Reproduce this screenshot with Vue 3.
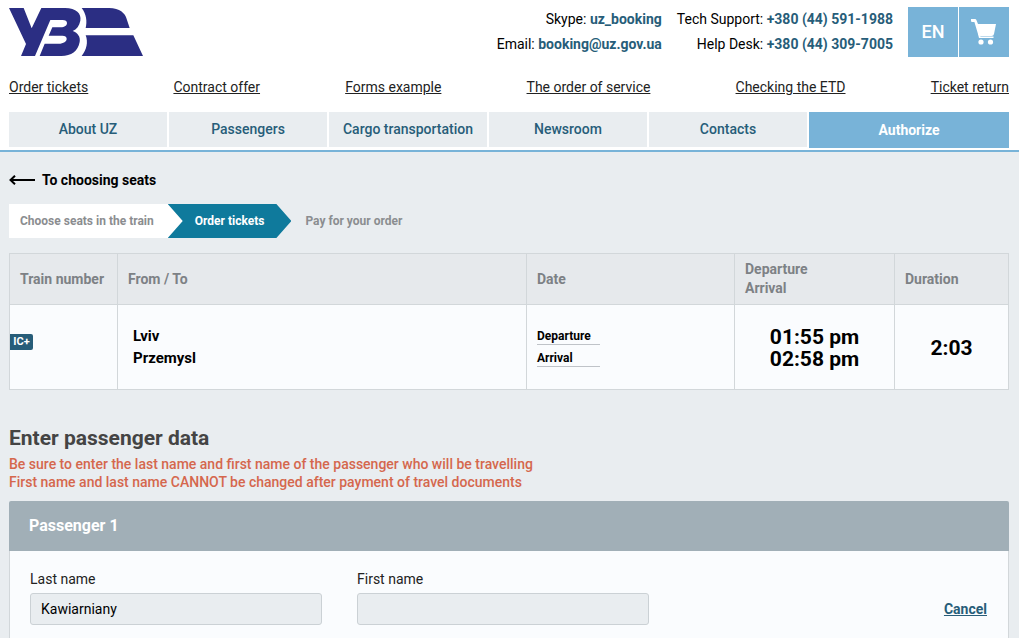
<script setup>
import { ref } from 'vue'

const quickLinks = [
  'Order tickets',
  'Contract offer',
  'Forms example',
  'The order of service',
  'Checking the ETD',
  'Ticket return'
]
const sections = ['About UZ', 'Passengers', 'Cargo transportation', 'Newsroom', 'Contacts']
const lastName = ref('Kawiarniany')
const firstName = ref('')
</script>

<template>
  <div class="page">
    <header class="header">
      <div class="top">
        <a class="logo" href="#" aria-label="UZ">
          <svg viewBox="0 0 402 144" width="134" height="48" fill="#2b2e83" aria-hidden="true">
            <path d="M0 0H44L68 61L97 0H168C202 0 218 17 214 38C211 53 203 64 191 69C207 75 215 87 212 102C207 130 187 144 157 144H92L107 107H149C164 107 173 100 173 92C173 86 168 83 160 83H119L130 58H155C167 58 174 52 174 45C174 39 169 36 161 36H124L78 144H36L51 108Z" />
            <path d="M218 0H300C333 0 348 17 352 30L362 60H230C235 40 232 18 218 0Z" />
            <path d="M230 82H373L402 144H218C233 126 238 102 230 82Z" />
          </svg>
        </a>
        <div class="contacts">
          <p>Skype: <a href="#">uz_booking</a></p>
          <p>Email: <a href="#">booking@uz.gov.ua</a></p>
        </div>
        <div class="contacts phones">
          <p>Tech Support: <b>+380 (44) 591-1988</b></p>
          <p>Help Desk: <b>+380 (44) 309-7005</b></p>
        </div>
        <button class="square" type="button">EN</button>
        <button class="square cart" type="button" aria-label="Cart">
          <svg viewBox="0 0 26 26" width="26" height="26" fill="#fff" aria-hidden="true">
            <path d="M0 0H4Q5 0 5.400 1L7 5H25L23 15Q22.700 17 20.500 17H9.500Q7.500 17 7 15L3.400 3H1Q0 3 0 1.500Z" />
            <path d="M7 15L8 19H22.500V17.500H9.500L8.500 15Z" />
            <circle cx="10" cy="23" r="2.600" />
            <circle cx="19.500" cy="23" r="2.600" />
          </svg>
        </button>
      </div>
      <nav class="quick">
        <a v-for="l in quickLinks" :key="l" href="#">{{ l }}</a>
      </nav>
      <nav class="sections">
        <a v-for="s in sections" :key="s" href="#">{{ s }}</a>
        <button type="button">Authorize</button>
      </nav>
    </header>

    <main class="main">
      <a class="back" href="#">
        <svg viewBox="0 0 26 10" width="26" height="10" fill="none" stroke="#000" stroke-width="2" aria-hidden="true">
          <path d="M26 5H1.500M6 0.700L1.500 5L6 9.300" />
        </svg>
        To choosing seats
      </a>
      <ol class="steps">
        <li class="done">Choose seats in the train</li>
        <li class="current">Order tickets</li>
        <li>Pay for your order</li>
      </ol>

      <table class="trip">
        <colgroup>
          <col class="c-train"><col class="c-route"><col class="c-date"><col class="c-time"><col class="c-dur">
        </colgroup>
        <thead>
          <tr>
            <th>Train number</th>
            <th>From / To</th>
            <th>Date</th>
            <th>Departure<br>Arrival</th>
            <th>Duration</th>
          </tr>
        </thead>
        <tbody>
          <tr>
            <td class="train"><span class="badge">IC+</span></td>
            <td class="route">Lviv<br>Przemysl</td>
            <td class="date"><span>Departure</span><span>Arrival</span></td>
            <td class="time">01:55 pm<br>02:58 pm</td>
            <td class="duration">2:03</td>
          </tr>
        </tbody>
      </table>

      <h1>Enter passenger data</h1>
      <p class="warning">
        Be sure to enter the last name and first name of the passenger who will be travelling<br>
        First name and last name CANNOT be changed after payment of travel documents
      </p>

      <section class="passenger">
        <h2>Passenger 1</h2>
        <form class="fields" @submit.prevent>
          <div class="field">
            <label for="last-name">Last name</label>
            <input id="last-name" v-model="lastName" type="text">
          </div>
          <div class="field">
            <label for="first-name">First name</label>
            <input id="first-name" v-model="firstName" type="text">
          </div>
          <a class="cancel" href="#">Cancel</a>
        </form>
      </section>
    </main>
  </div>
</template>

<style>
body {
  margin: 0;
  background: #e9edf0;
  overflow: hidden;
}
</style>

<style scoped>
.page {
  font-family: Roboto, "Liberation Sans", sans-serif;
  font-size: 14px;
  line-height: 18px;
  color: #000;
}
button,
input {
  font: inherit;
}
p,
h1,
h2,
ol {
  margin: 0;
  padding: 0;
}
.header {
  background: #fff;
  border-bottom: 2px solid #78b3d8;
  padding: 7px 10px 2px 9px;
}
.top {
  display: flex;
  align-items: flex-start;
}
.logo {
  margin: 1px auto 0 0;
  height: 48px;
}
.logo svg {
  display: block;
}
.contacts {
  text-align: right;
  line-height: 25px;
}
.contacts a,
.contacts b {
  color: #275d79;
  font-weight: 700;
  text-decoration: none;
}
.phones {
  margin: 0 15px;
}
.square {
  width: 50px;
  height: 50px;
  border: 0;
  padding: 0;
  background: #78b3d8;
  color: #fff;
  font-size: 18px;
  font-weight: 500;
}
.cart {
  margin-left: 1px;
}
.cart svg {
  display: block;
  margin: 0 auto;
}
.quick {
  display: flex;
  justify-content: space-between;
  margin-top: 21px;
}
.quick a {
  color: #222;
}
.sections {
  display: flex;
  gap: 2px;
  margin-top: 16px;
}
.sections a {
  flex: 158;
  height: 35px;
  line-height: 35px;
  background: #e9edf0;
  color: #275d79;
  font-weight: 500;
  text-align: center;
  text-decoration: none;
  white-space: nowrap;
}
.sections button {
  flex: 200;
  height: 36px;
  border: 0;
  padding: 0;
  background: #78b3d8;
  color: #fff;
  font-weight: 700;
}
.main {
  padding: 19px 10px 0 9px;
}
.back {
  display: inline-flex;
  align-items: center;
  gap: 7px;
  color: #000;
  font-weight: 700;
  text-decoration: none;
}
.steps {
  display: flex;
  list-style: none;
  margin-top: 15px;
  font-size: 12px;
  font-weight: 700;
  line-height: 34px;
  color: #8b8d90;
}
.steps .done {
  background: #fff;
  padding: 0 29px 0 11px;
}
.steps .current {
  background: #0f7a9c;
  color: #fff;
  padding: 0 27px;
  margin: 0 14px 0 -15px;
  clip-path: polygon(0 0, calc(100% - 15px) 0, 100% 50%, calc(100% - 15px) 100%, 0 100%, 15px 50%);
}
.trip {
  width: 100%;
  table-layout: fixed;
  border-collapse: collapse;
  margin-top: 15px;
  background: #fafcfe;
}
.c-train { width: 108px; }
.c-date { width: 208px; }
.c-time { width: 160px; }
.c-dur { width: 114px; }
.trip th,
.trip td {
  border: 1px solid #d2d7da;
  padding: 0 10px;
  text-align: left;
}
.trip th {
  height: 50px;
  background: #e6e9ec;
  color: #7d8185;
  font-weight: 700;
  line-height: 19px;
}
.trip td {
  box-sizing: border-box;
  height: 85px;
  font-weight: 700;
}
.trip .train {
  padding: 0;
}
.badge {
  display: block;
  width: 23px;
  margin-top: -10px;
  border-radius: 0 2px 2px 0;
  background: #275d79;
  color: #fff;
  font-size: 11px;
  line-height: 16px;
  text-align: center;
}
.trip .route {
  padding-left: 15px;
  font-size: 15px;
  line-height: 22px;
}
.trip .date {
  padding-bottom: 5px;
}
.date span {
  display: block;
  width: 63px;
  margin-top: 6px;
  border-bottom: 1px solid #bfc3c8;
  font-size: 12px;
  line-height: 15px;
}
.trip .time,
.trip .duration {
  padding: 2px 0 0;
  font-size: 21px;
  font-weight: 700;
  line-height: 22px;
  text-align: center;
}
h1 {
  margin-top: 36px;
  color: #444;
  font-size: 21px;
  font-weight: 700;
  line-height: 24px;
}
.warning {
  margin-top: 5px;
  color: #d5674d;
  font-weight: 500;
}
.passenger {
  margin-top: 10px;
}
.passenger h2 {
  padding-left: 20px;
  border-radius: 2px 2px 0 0;
  background: #a1afb7;
  color: #fff;
  font-size: 16px;
  font-weight: 700;
  line-height: 50px;
}
.fields {
  display: flex;
  align-items: flex-end;
  gap: 35px;
  padding: 19px 21px 20px 20px;
  border: 1px solid #d2d7da;
  border-top: 0;
  background: #fafcfe;
}
.field {
  width: 292px;
}
.field label {
  display: block;
  margin-bottom: 5px;
  color: #222;
}
.field input {
  display: block;
  box-sizing: border-box;
  width: 100%;
  height: 32px;
  border: 1px solid #cbd1d5;
  border-radius: 3px;
  padding: 0 10px;
  background: #e9edf0;
  color: #000;
}
.cancel {
  margin: 0 0 7px auto;
  color: #275d79;
  font-weight: 700;
}
</style>
